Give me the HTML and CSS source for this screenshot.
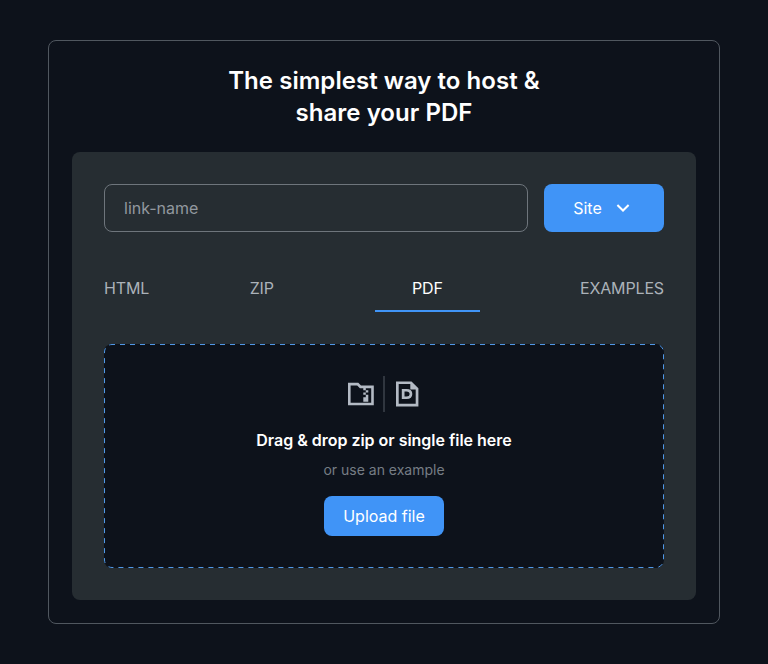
FILE: index.html
```html
<!DOCTYPE html>
<html lang="en">
<head>
<meta charset="utf-8">
<title>Host a PDF</title>
<link rel="stylesheet" href="styles.css">
</head>
<body>
<main class="card">
  <h1 class="title">The simplest way to host &amp;<br>share your PDF</h1>
  <section class="panel">
    <div class="link-row">
      <div class="link-input">link-name</div>
      <button class="button site-button">Site
        <svg class="chevron" width="14" height="8" viewBox="0 0 14 8" fill="none" stroke="currentColor" stroke-width="2"><path d="M1.4 1 7 6.5 12.6 1"/></svg>
      </button>
    </div>
    <nav class="tabs">
      <span class="tab">HTML</span>
      <span class="tab">ZIP</span>
      <span class="tab tab-active">PDF</span>
      <span class="tab">EXAMPLES</span>
    </nav>
    <div class="dropzone">
      <svg class="dashes" width="560" height="224" fill="none"><rect x="0.5" y="0.5" width="559" height="223" rx="7.5"/></svg>
      <div class="icons">
        <svg class="icon" width="32" height="32" viewBox="0 0 32 32" fill="currentColor"><path fill-rule="evenodd" d="M3 4.8H13.3L16 7.6H28.8V27.3H3ZM5.6 7.4V24.7H26.2V10.2H14.9L12.2 7.4Z"/><path d="M18.3 10h2.5v2.3h-2.5zM20.8 12.3h2.5v2.3h-2.5zM18.3 14.6h2.5v2.2h-2.5zM20.8 16.8h2.5v7h-5v-4.6h2.5z"/></svg>
        <span class="divider"></span>
        <svg class="icon" width="32" height="32" viewBox="0 0 32 32" fill="currentColor"><path fill-rule="evenodd" d="M5 3.4H20.5L27.4 10.3V28.4H5ZM7.7 6.1V25.7H24.7V11.5H19.3V6.1Z"/><path fill-rule="evenodd" d="M10.8 11H15.5Q21.3 11 21.3 16T15.5 21H10.8ZM13.5 13.5V18.5H15.5Q18.6 18.5 18.6 16T15.5 13.5Z"/></svg>
      </div>
      <p class="drop-title">Drag &amp; drop zip or single file here</p>
      <p class="drop-note">or use an example</p>
      <button class="button upload-button">Upload file</button>
    </div>
  </section>
</main>
</body>
</html>
```
FILE: styles.css
```css
* { box-sizing: border-box; }
body {
  margin: 0;
  padding: 40px 48px;
  background: #0d121b;
  color: #fff;
  font: 400 16px/24px Inter, sans-serif;
}
.card {
  height: 584px;
  padding: 24px 23px 23px;
  border: 1px solid #50575f;
  border-radius: 8px;
}
.title {
  margin: 0 0 23px;
  font-size: 24px;
  line-height: 32px;
  font-weight: 600;
  letter-spacing: 0.04px;
  text-align: center;
}
.panel {
  height: 448px;
  padding: 32px;
  border-radius: 8px;
  background: #262d32;
}
.link-row { display: flex; gap: 16px; }
.link-input {
  flex: 1;
  height: 48px;
  padding: 11px 19px;
  border: 1px solid #6e757c;
  border-radius: 8px;
  color: #92989f;
}
.button {
  display: flex;
  align-items: center;
  justify-content: center;
  width: 120px;
  padding: 0;
  border: 0;
  border-radius: 8px;
  background: #4094f7;
  color: #fff;
  font: inherit;
}
.site-button { height: 48px; gap: 14px; padding-right: 5px; }
.tabs {
  display: flex;
  justify-content: space-between;
  height: 48px;
  margin: 32px 0;
  letter-spacing: -0.15px;
}
.tab { padding-top: 12px; color: #abb2b9; }
.tab-active {
  width: 105px;
  margin: 0 -0.5px 0 0.5px;
  border-bottom: 2px solid #4094f7;
  color: #fff;
  text-align: center;
}
.dropzone {
  position: relative;
  display: flex;
  flex-direction: column;
  align-items: center;
  height: 224px;
  padding-top: 32px;
  border-radius: 8px;
  background: #0d121b;
}
.dashes {
  position: absolute;
  inset: 0;
  stroke: #4f97e6;
  stroke-dasharray: 5 5;
  stroke-dashoffset: 2;
}
.icons { display: flex; align-items: center; gap: 6px; height: 36px; }
.icon { color: #b3bac4; }
.divider { width: 2px; height: 36px; background: #30363f; }
.drop-title { margin: 16px 0 8px; font-weight: 600; letter-spacing: -0.02px; }
.drop-note { margin: 0 0 16px; font-size: 14px; line-height: 20px; color: #767d85; }
.upload-button { height: 40px; }
```
